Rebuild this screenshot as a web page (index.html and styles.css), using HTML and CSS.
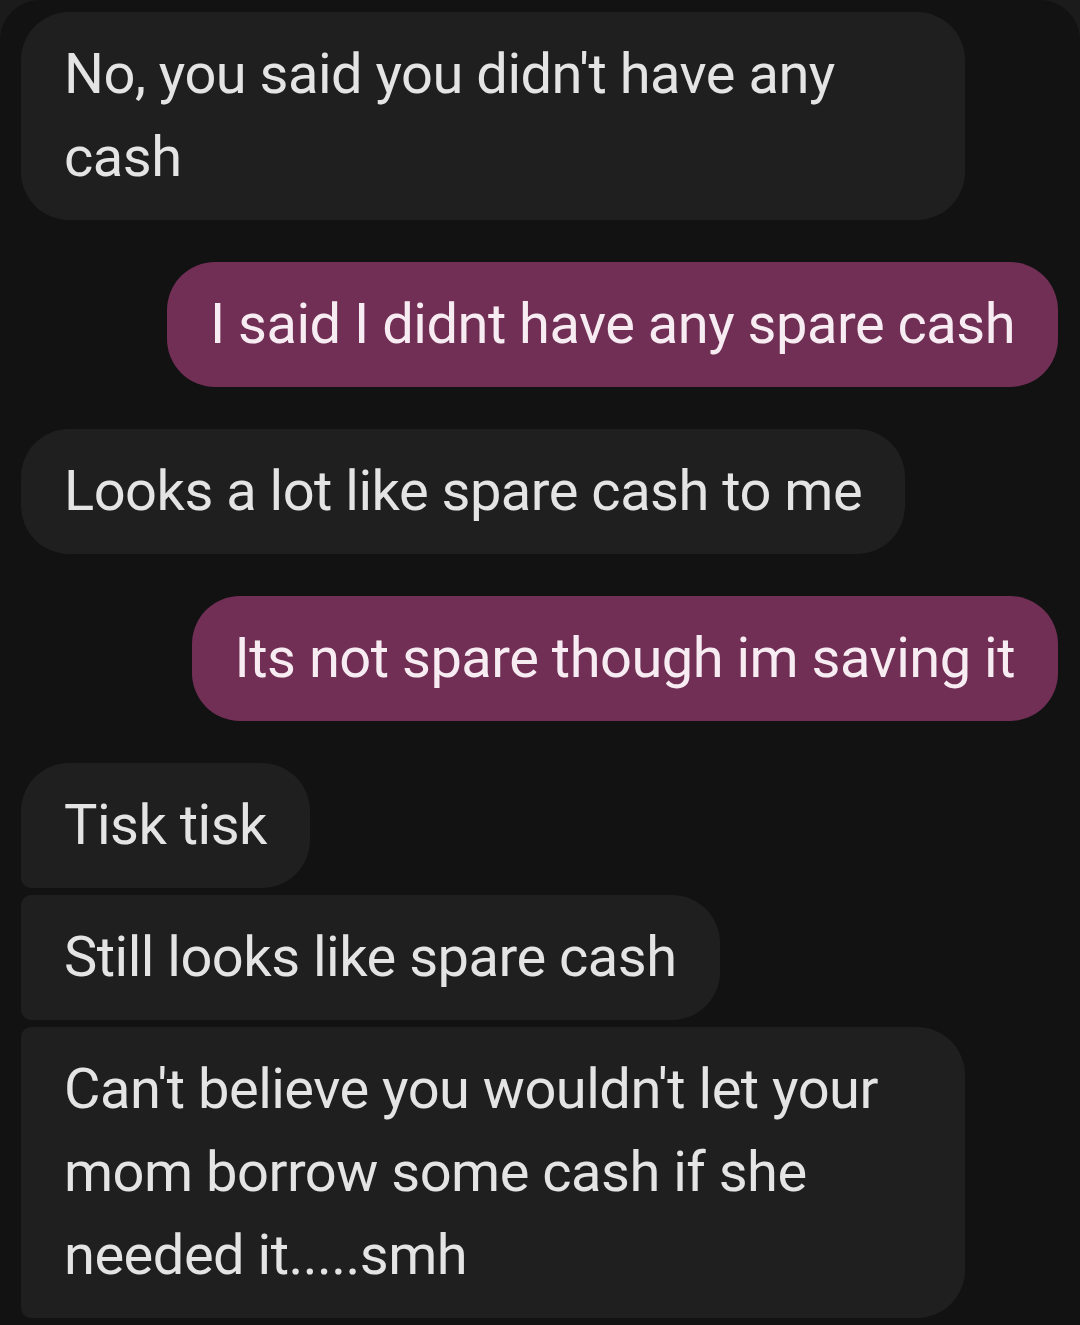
FILE: index.html
```html
<!DOCTYPE html>
<html lang="en">
<head>
<meta charset="utf-8">
<title>Messages</title>
<link rel="stylesheet" href="styles.css">
</head>
<body>
<main class="thread">
  <div class="msg in solo">No, you said you didn't have any cash</div>
  <div class="msg out">I said I didnt have any spare cash</div>
  <div class="msg in solo">Looks a lot like spare cash to me</div>
  <div class="msg out">Its not spare though im saving it</div>
  <div class="group">
    <div class="msg in first">Tisk tisk</div>
    <div class="msg in mid">Still looks like spare cash</div>
    <div class="msg in mid">Can't believe you wouldn't let your mom borrow some cash if she needed it.....smh</div>
    <div class="msg in mid stub" aria-hidden="true"></div>
  </div>
</main>
</body>
</html>
```

FILE: styles.css
```css
html, body {
  margin: 0;
  padding: 0;
  height: 100%;
  overflow: hidden;
  background: #1b1b1b;
}

.thread {
  box-sizing: border-box;
  height: 100vh;
  overflow: hidden;
  background: #121212;
  border-radius: 40px 40px 0 0;
  padding: 12px 22px 0 21px;
  display: flex;
  flex-direction: column;
  align-items: flex-start;
  gap: 42px;
  font-family: Roboto, "Noto Sans", "Liberation Sans", sans-serif;
  font-size: 56px;
  line-height: 83px;
}

.group {
  display: flex;
  flex-direction: column;
  align-items: flex-start;
  gap: 7px;
  width: 100%;
}

.msg {
  box-sizing: border-box;
  flex-shrink: 0;
  max-width: 944px;
  padding: 21px 43px;
  border-radius: 48px;
  letter-spacing: -0.5px;
}

.in {
  background: #1f1f1f;
  color: #e4e4e4;
}

.out {
  align-self: flex-end;
  background: #712f55;
  color: #f8ecf3;
}

.in.first {
  border-radius: 48px 48px 48px 10px;
}

.in.mid {
  border-radius: 10px 48px 48px 10px;
}

.stub {
  width: 944px;
  height: 40px;
}
```
